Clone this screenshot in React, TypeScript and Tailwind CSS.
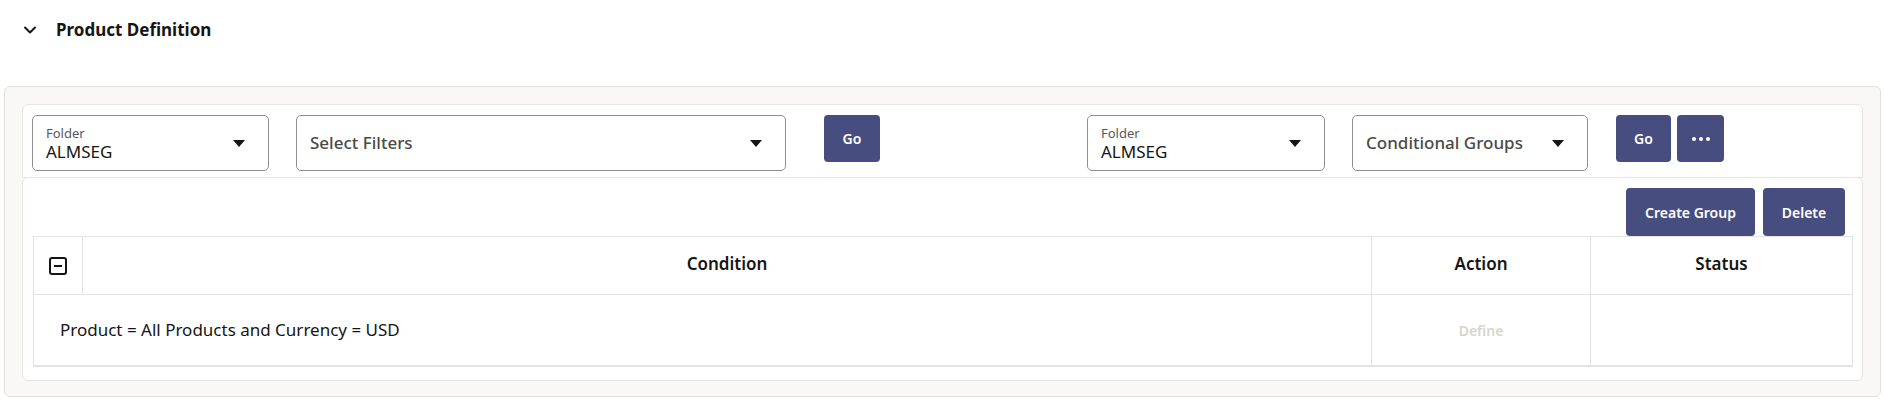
import React from 'react';
import { ChevronDown } from 'lucide-react';

const font = { fontFamily: '"Noto Sans", "Liberation Sans", sans-serif' };

function Caret() {
  return (
    <svg width="12" height="7" viewBox="0 0 12 7" className="shrink-0">
      <path d="M0 0 H12 L6 7 Z" fill="#161513" />
    </svg>
  );
}

function FolderSelect({ width }: { width: string }) {
  return (
    <div className={`${width} h-[56px] shrink-0 rounded-[5px] border border-[#8f8f8f] bg-white flex items-center pl-[13px] pr-[23px]`}>
      <div className="flex-1 flex flex-col leading-none">
        <span className="text-[13px] leading-[16px] text-[#575757]">Folder</span>
        <span className="text-[17px] leading-[21px] text-[#161513]">ALMSEG</span>
      </div>
      <Caret />
    </div>
  );
}

function PlainSelect({ width, label }: { width: string; label: string }) {
  return (
    <div className={`${width} h-[56px] shrink-0 rounded-[5px] border border-[#8f8f8f] bg-white flex items-center pl-[13px] pr-[23px]`}>
      <span className="flex-1 text-[17px] font-medium text-[#4a4a48]">{label}</span>
      <Caret />
    </div>
  );
}

function Btn({ className, children }: { className: string; children: React.ReactNode }) {
  return (
    <button className={`${className} shrink-0 rounded-[4px] bg-[#474d7f] text-white text-[14px] font-semibold flex items-center justify-center`}>
      {children}
    </button>
  );
}

export default function App() {
  return (
    <div className="w-[1884px] h-[400px] bg-white overflow-hidden" style={font}>
      {/* Section header */}
      <div className="h-[60px] flex items-center pl-[20px]">
        <ChevronDown className="w-[20px] h-[20px] text-[#161513]" strokeWidth={2.4} />
        <h2 className="ml-[16px] text-[17px] font-bold text-[#161513]">Product Definition</h2>
      </div>

      {/* Outer panel */}
      <div className="mt-[26px] ml-[4px] mr-[3px] rounded-md border border-[#e2e0db] bg-[#f9f8f6] px-[17px] pt-[17px] pb-[15px]">
        {/* Filter toolbar */}
        <div className="h-[74px] rounded-t-md border border-[#e5e5e3] bg-white flex items-start pt-[10px] pl-[9px]">
          <FolderSelect width="w-[237px]" />
          <PlainSelect width="w-[490px] ml-[27px]" label="Select Filters" />
          <Btn className="ml-[38px] w-[56px] h-[47px]">Go</Btn>
          <FolderSelect width="w-[238px] ml-[207px]" />
          <PlainSelect width="w-[236px] ml-[27px]" label="Conditional Groups" />
          <Btn className="ml-[28px] w-[55px] h-[47px]">Go</Btn>
          <Btn className="ml-[6px] w-[47px] h-[47px] gap-[3px]">
            <span className="w-[4px] h-[4px] rounded-full bg-white" />
            <span className="w-[4px] h-[4px] rounded-full bg-white" />
            <span className="w-[4px] h-[4px] rounded-full bg-white" />
          </Btn>
        </div>

        {/* Groups table card */}
        <div className="-mt-px rounded-md border border-[#e5e5e3] bg-white pt-[10px] pb-[13px] pl-[10px] pr-[9px]">
          <div className="flex justify-end gap-[8px] pr-[8px]">
            <Btn className="w-[129px] h-[48px]">Create Group</Btn>
            <Btn className="w-[82px] h-[48px]">Delete</Btn>
          </div>
          <div className="border-x border-t border-b-2 border-[#e3e3e1]">
            <div className="h-[58px] flex border-b border-[#e3e3e1] text-[17px] font-semibold text-[#161513]">
              <div className="w-[49px] shrink-0 border-r border-[#e3e3e1] flex items-center justify-center">
                <span className="w-[18px] h-[18px] rounded-[3px] border-2 border-[#161513] flex items-center justify-center">
                  <span className="w-[8px] h-[2px] bg-[#161513]" />
                </span>
              </div>
              <div className="flex-1 flex items-center justify-center border-r border-[#e3e3e1] pb-[3px]">Condition</div>
              <div className="w-[219px] shrink-0 flex items-center justify-center border-r border-[#e3e3e1] pb-[3px]">Action</div>
              <div className="w-[261px] shrink-0 flex items-center justify-center pb-[3px]">Status</div>
            </div>
            <div className="h-[70px] flex text-[17px] text-[#161513]">
              <div className="flex-1 flex items-center pl-[26px] border-r border-[#e3e3e1]">
                Product = All Products and Currency = USD
              </div>
              <div className="w-[219px] shrink-0 flex items-center justify-center border-r border-[#e3e3e1] text-[14px] font-semibold text-[#d6d5d0]">
                Define
              </div>
              <div className="w-[261px] shrink-0" />
            </div>
          </div>
        </div>
      </div>
    </div>
  );
}
